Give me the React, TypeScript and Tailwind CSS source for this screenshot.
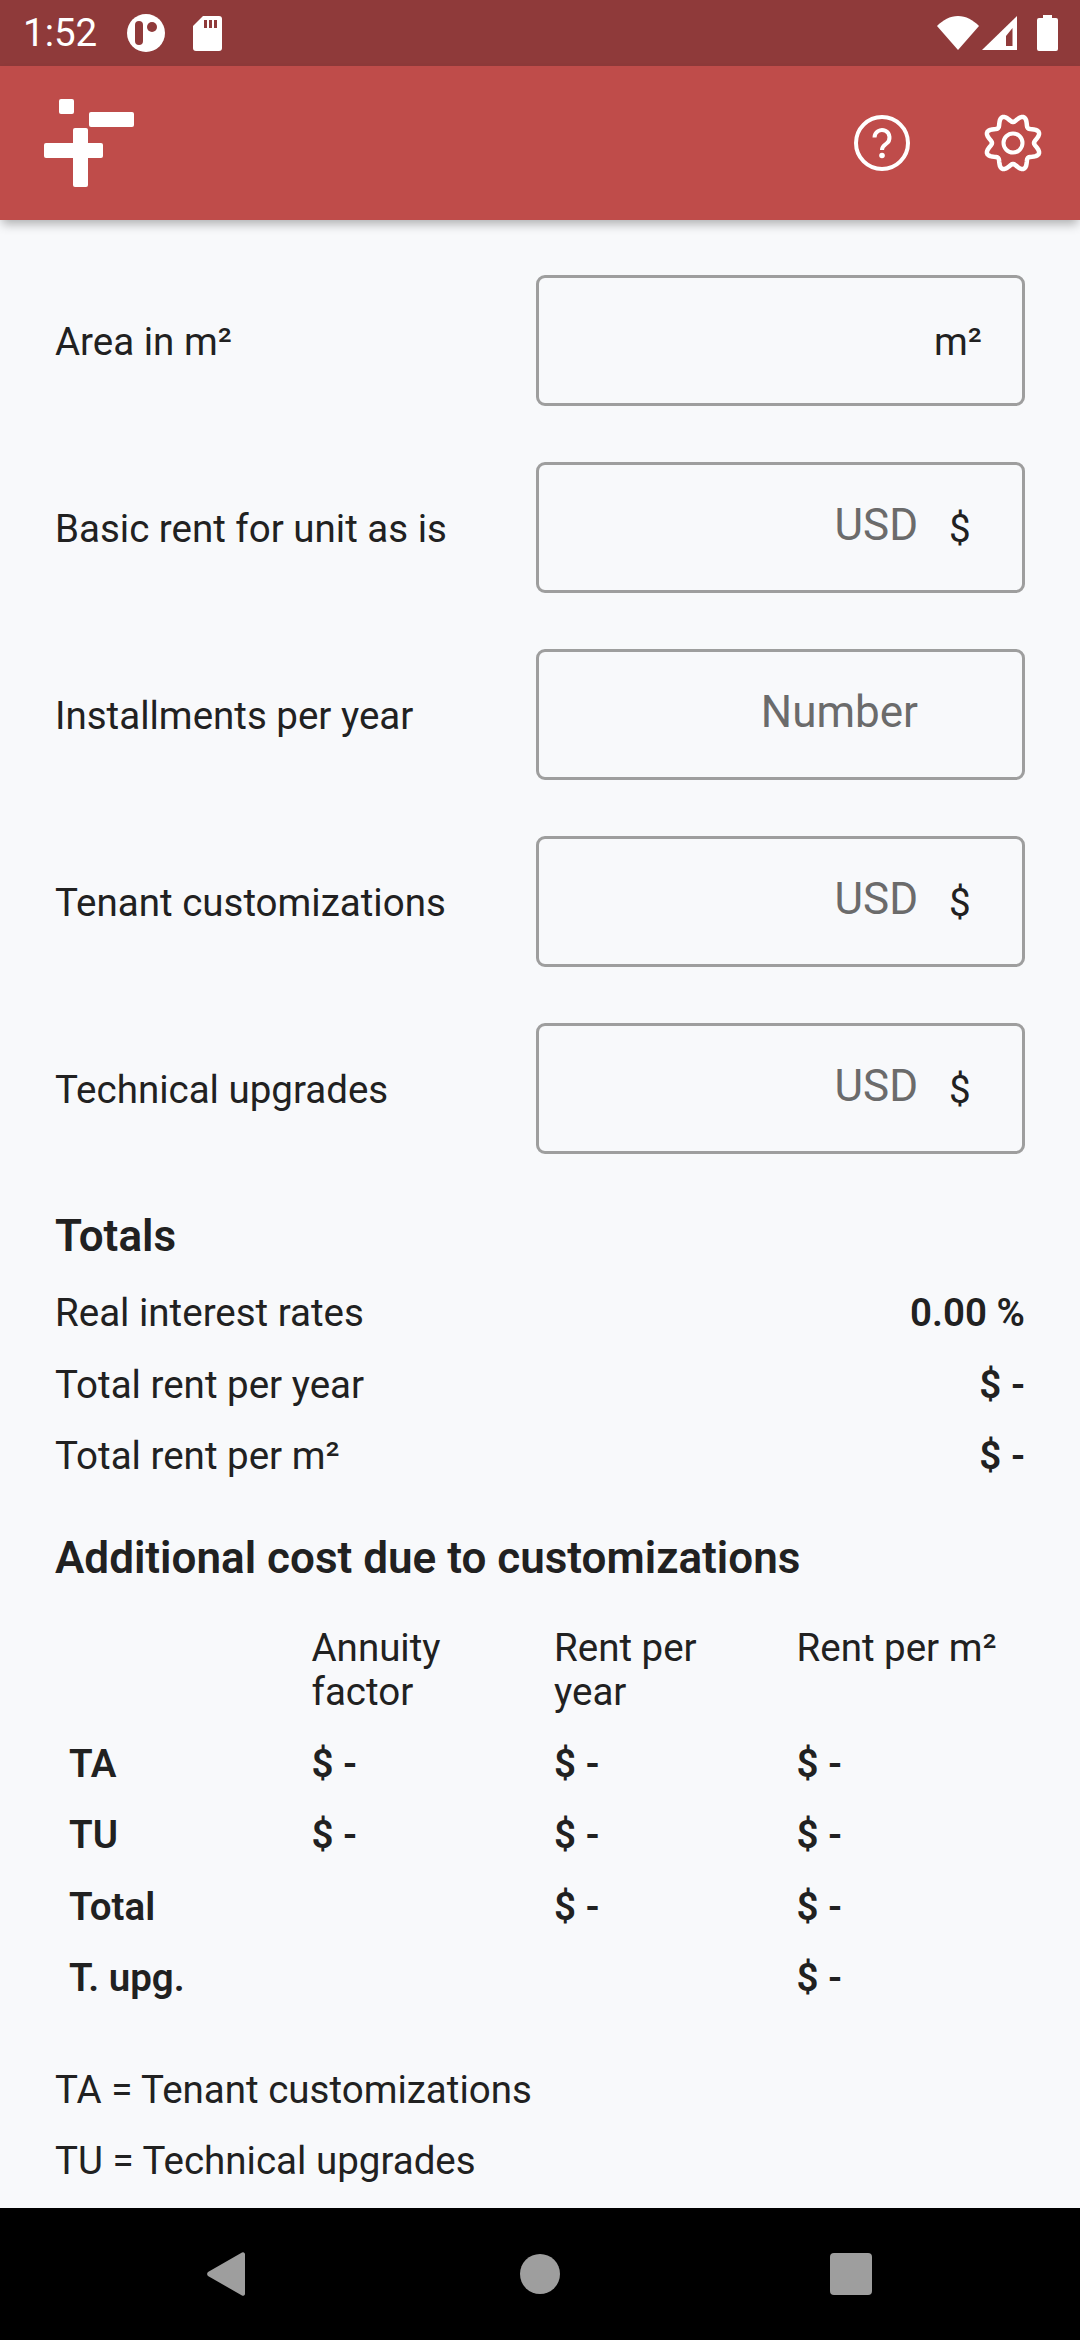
const font = "font-['Roboto',sans-serif]"

// wavy outline of the settings gear, 8 teeth with a valley at the top
const gearPoints: string[] = []
for (let a = 0; a < 360; a += 3) {
  const rad = (a * Math.PI) / 180
  const r = 24.5 + 3.5 * Math.cos(8 * (rad - Math.PI / 8))
  gearPoints.push(`${(29 + r * Math.sin(rad)).toFixed(2)},${(29 - r * Math.cos(rad)).toFixed(2)}`)
}
const gearPath = "M" + gearPoints.join("L") + "z"

function StatusBar() {
  return (
    <div className="flex h-[66px] shrink-0 items-center bg-[#8f3a3a] pl-[23px] pr-[22px] text-white">
      <span className="w-[104px] text-[38.5px] leading-none">1:52</span>
      <svg width="38" height="38" viewBox="0 0 38 38">
        <circle cx="19" cy="19" r="19" fill="#fff" />
        <rect x="8" y="7" width="8" height="24" rx="4" fill="#8f3a3a" />
        <circle cx="25" cy="13" r="5" fill="#8f3a3a" />
      </svg>
      <svg className="ml-[28px]" width="29" height="35" viewBox="0 0 29 35">
        <path d="M10 0h16a3 3 0 0 1 3 3v29a3 3 0 0 1-3 3H3a3 3 0 0 1-3-3V10z" fill="#fff" />
        <rect x="11" y="4" width="3" height="8" fill="#8f3a3a" />
        <rect x="16" y="4" width="3" height="8" fill="#8f3a3a" />
        <rect x="21" y="4" width="3" height="8" fill="#8f3a3a" />
      </svg>
      <div className="ml-auto flex items-center">
        <svg width="42" height="34" viewBox="0 0 42 34">
          <path d="M0 10C6 4 13 0 21 0s15 4 21 10L21 34z" fill="#fff" />
        </svg>
        <svg className="ml-[3px]" width="35" height="34" viewBox="0 0 35 34">
          <path d="M35 0v34H0z" fill="#fff" />
          <path d="M24 20l6.500-8v18H24z" fill="#8f3a3a" />
        </svg>
        <svg className="ml-[20px]" width="21" height="36" viewBox="0 0 21 36">
          <path d="M6 3V0h9v3h4a2 2 0 0 1 2 2v29a2 2 0 0 1-2 2H2a2 2 0 0 1-2-2V5a2 2 0 0 1 2-2z" fill="#fff" />
        </svg>
      </div>
    </div>
  )
}

function AppBar() {
  return (
    <div className="relative z-10 flex h-[154px] shrink-0 items-center bg-[#bf4c4a] pl-[44px] pr-[38px] shadow-[0_6px_10px_-2px_rgba(0,0,0,0.3)]">
      <svg width="90" height="88" viewBox="0 0 90 88">
        <rect x="15" y="0" width="15" height="15" rx="2" fill="#fff" />
        <rect x="45" y="13" width="45" height="15" rx="2" fill="#fff" />
        <rect x="0" y="44" width="59" height="15" rx="2" fill="#fff" />
        <rect x="29" y="29" width="15" height="59" rx="2" fill="#fff" />
      </svg>
      <svg className="ml-auto" width="58" height="58" viewBox="0 0 58 58" fill="none" stroke="#fff" strokeWidth="4">
        <circle cx="29" cy="29" r="26" />
        <path d="M21.500 23.500a7.500 7.500 0 1 1 12 6c-2.500 2-4.500 2.500-4.500 6.500" />
        <circle cx="29" cy="41.500" r="2.800" fill="#fff" stroke="none" />
      </svg>
      <svg className="ml-[73px]" width="58" height="58" viewBox="0 0 58 58" fill="none" stroke="#fff" strokeWidth="4.500" strokeLinejoin="round">
        <path d={gearPath} />
        <circle cx="29" cy="29" r="9.500" strokeWidth="4" />
      </svg>
    </div>
  )
}

function Field({ label, hint, suffix, unit }: { label: string; hint?: string; suffix?: string; unit?: string }) {
  return (
    <div className="flex items-center justify-between">
      <span className="pt-[3px] text-[38.5px] leading-[44px] text-[#212121]">{label}</span>
      <div className="flex h-[131px] w-[489px] items-center justify-end rounded-[9px] border-[3px] border-[#9e9e9e] pr-[40px]">
        {unit && <span className="pt-[3px] text-[38.5px] leading-none text-[#212121]">{unit}</span>}
        {hint && <span className={suffix ? "mb-[6px] text-[44px] leading-none text-[#6b6b6b]" : "mb-[6px] mr-[64px] text-[44px] leading-none text-[#6b6b6b]"}>{hint}</span>}
        {suffix && <span className="ml-[31px] mr-[13px] w-[20px] pt-[3px] text-center text-[38.5px] leading-none text-[#212121]">{suffix}</span>}
      </div>
    </div>
  )
}

const costRows = [
  ["TA", "$ -", "$ -", "$ -"],
  ["TU", "$ -", "$ -", "$ -"],
  ["Total", "", "$ -", "$ -"],
  ["T. upg.", "", "", "$ -"],
]

export default function App() {
  return (
    <div className={`flex h-[2340px] w-[1080px] flex-col overflow-hidden bg-[#f8f9fb] ${font}`}>
      <StatusBar />
      <AppBar />
      <div className="flex flex-1 flex-col px-[55px] pt-[55px] text-[#212121]">
        <div className="flex flex-col gap-[56px]">
          <Field label="Area in m²" unit="m²" />
          <Field label="Basic rent for unit as is" hint="USD" suffix="$" />
          <Field label="Installments per year" hint="Number" />
          <Field label="Tenant customizations" hint="USD" suffix="$" />
          <Field label="Technical upgrades" hint="USD" suffix="$" />
        </div>

        <h2 className="mt-[56px] text-[44px] font-semibold leading-[52px]">Totals</h2>
        <div className="mt-[15px] flex flex-col text-[38.5px] leading-[71.5px]">
          <div className="flex justify-between"><span>Real interest rates</span><b className="font-semibold">0.00 %</b></div>
          <div className="flex justify-between"><span>Total rent per year</span><b className="font-semibold">$ -</b></div>
          <div className="flex justify-between"><span>Total rent per m²</span><b className="font-semibold">$ -</b></div>
        </div>

        <h2 className="mt-[40px] text-[44px] font-semibold leading-[52px]">Additional cost due to customizations</h2>

        <div className="mt-[42px] grid grid-cols-4 text-[38.5px] leading-[44px]">
          <div />
          <div className="px-[14px]">Annuity factor</div>
          <div className="px-[14px]">Rent per year</div>
          <div className="px-[14px]">Rent per m²</div>
        </div>
        <div className="mt-[14px] grid grid-cols-4 text-[38.5px] font-semibold leading-[71.5px]">
          {costRows.map((row) =>
            row.map((cell, i) => (
              <div key={row[0] + i} className="px-[14px]">{cell}</div>
            ))
          )}
        </div>

        <div className="mt-[40px] flex flex-col text-[38.5px] leading-[71.5px]">
          <span>TA = Tenant customizations</span>
          <span>TU = Technical upgrades</span>
        </div>
      </div>

      <div className="flex h-[132px] shrink-0 items-center bg-black pl-[206px]">
        <svg width="40" height="46" viewBox="0 0 40 46">
          <path d="M36 1.500a2 2 0 0 1 3 1.500v40a2 2 0 0 1-3 1.500L2 25a3 3 0 0 1 0-4z" fill="#9e9e9e" />
        </svg>
        <div className="ml-[274px] h-[40px] w-[40px] rounded-full bg-[#9e9e9e]" />
        <div className="ml-[270px] h-[42px] w-[42px] rounded-[4px] bg-[#9e9e9e]" />
      </div>
    </div>
  )
}
